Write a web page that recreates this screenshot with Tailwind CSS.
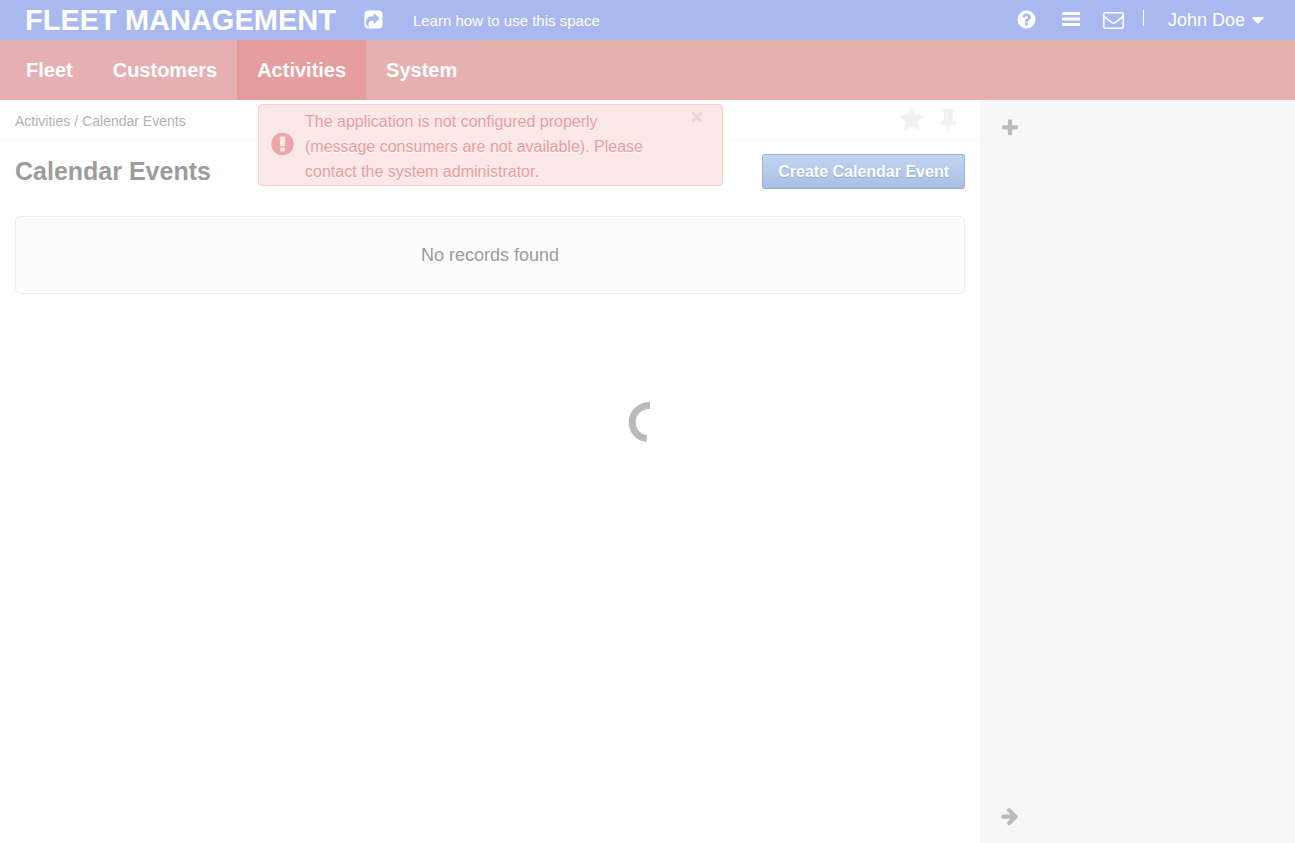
<!DOCTYPE html>
<html lang="en">
<head>
<meta charset="utf-8">
<title>Calendar Events - Fleet Management</title>
<script src="https://cdn.jsdelivr.net/npm/@tailwindcss/browser@4"></script>
</head>
<body class="min-h-screen flex flex-col bg-white font-['Liberation_Sans',Arial,sans-serif]">
<header class="h-10 flex items-center bg-[#aab8f0] text-white pl-[25px] pr-[31px]">
  <a href="#" class="text-[29px] leading-10 font-bold whitespace-nowrap">FLEET MANAGEMENT</a>
  <button type="button" aria-label="Share" class="ml-[27px] pb-px">
    <svg class="size-[21px]" viewBox="0 0 1792 1792" fill="currentColor"><path fill-rule="evenodd" d="M416 128h960q119 0 203.500 84.500T1664 416v960q0 119-84.500 203.500T1376 1664H416q-119 0-203.500-84.500T128 1376V416q0-119 84.500-203.500T416 128zM1005 1197l352-352q19-19 19-45t-19-45l-352-352q-30-31-69-14-40 17-40 59v160q-119 0-216 19.500t-162.500 51-114 79-76.500 95.500-44.500 109-21.500 111.500-5 110.500q0 181 167 404 11 12 25 12 7 0 13-3 22-9 19-33-44-354 62-473 46-52 130-75.500t224-23.500v160q0 42 40 59 12 5 24 5 26 0 45-19z"/></svg>
  </button>
  <a href="#" class="ml-[29px] text-[15px] leading-10 pt-px whitespace-nowrap">Learn how to use this space</a>
  <div class="ml-auto flex items-center">
    <button type="button" aria-label="Help" class="mr-[25px] pb-[2px]">
      <svg class="size-[21px]" viewBox="0 0 1792 1792" fill="currentColor"><path d="M1024 1376v-192q0-14-9-23t-23-9h-192q-14 0-23 9t-9 23v192q0 14 9 23t23 9h192q14 0 23-9t9-23zm256-672q0-88-55.500-163t-138.500-116-170-41q-243 0-371 213-15 24 8 42l132 100q7 6 19 6 16 0 25-12 53-68 86-92 34-24 86-24 48 0 85.500 26t37.500 59q0 38-20 61t-68 45q-63 28-115.500 86.500t-52.500 125.500v36q0 14 9 23t23 9h192q14 0 23-9t9-23q0-19 21.500-49.500t54.500-49.500q32-18 49-28.500t46-35 44.500-48 28-60.500 12.500-81zm384 192q0 209-103 385.500t-279.500 279.500-385.500 103-385.500-103-279.500-279.500-103-385.500 103-385.500 279.500-279.500 385.500-103 385.500 103 279.500 279.500 103 385.500z"/></svg>
    </button>
    <button type="button" aria-label="Menu" class="mr-[23px] pb-[2px]">
      <svg class="w-[18px] h-[14px]" viewBox="0 0 18 14" fill="currentColor"><rect width="18" height="3" rx="0.500"/><rect y="5.500" width="18" height="3" rx="0.500"/><rect y="11" width="18" height="3" rx="0.500"/></svg>
    </button>
    <button type="button" aria-label="Messages" class="mr-[19px]">
      <svg class="w-[21px] h-[17px]" viewBox="0 0 21 17" fill="none" stroke="currentColor" stroke-width="1.600"><rect x="0.800" y="0.800" width="19.400" height="15.400" rx="1.200"/><path d="M1 4C3 6.300 5.500 8 8 10c1.800 1.500 3.200 1.500 5 0 2.500-2 5-3.700 7-6"/></svg>
    </button>
    <span class="w-px h-4 mb-1 bg-white mr-[24px]"></span>
    <button type="button" class="flex items-center gap-[7px] text-lg leading-10 whitespace-nowrap">John Doe
      <svg class="w-[12px] h-[7px]" viewBox="0 0 12 7" fill="currentColor"><path d="M0.600 0h10.800q0.600 0 .6.500 0 .3-.3.600L6.600 6.500q-.6.600-1.200 0L.3 1.100Q0 .8 0 .5 0 0 .6 0z"/></svg>
    </button>
  </div>
</header>

<nav class="flex bg-linear-to-r from-[#e6afb4] to-[#e6b0af] to-40% pl-[6px] text-white text-xl font-bold leading-[60px]">
  <a href="#" class="px-5">Fleet</a>
  <a href="#" class="px-5">Customers</a>
  <a href="#" class="px-5 bg-[#e59d9d]" aria-current="page">Activities</a>
  <a href="#" class="px-5">System</a>
</nav>

<div class="flex flex-1">
  <main class="flex-1 min-w-0 text-[#9c9c9c]">
    <div class="h-[41px] flex items-center justify-between border-b border-[#f7f7f7] pl-[15px] pr-[19px]">
      <div class="flex gap-1 text-sm text-[#b2b2b2] pt-[2px]"><a href="#">Activities</a><span>/</span><a href="#">Calendar Events</a></div>
      <div class="flex gap-3 text-[#f1f1f1] pb-[2px]">
        <button type="button" aria-label="Favorite"><svg class="size-[25px]" viewBox="0 0 1792 1792" fill="currentColor"><path d="M1728 647q0 22-26 48l-363 354 86 500q1 7 1 20 0 21-10.500 35.500t-30.500 14.500q-19 0-40-12l-449-236-449 236q-22 12-40 12-21 0-31.500-14.500t-10.500-35.500q0-6 2-20l86-500-364-354q-25-27-25-48 0-37 56-46l502-73 225-455q19-41 49-41t49 41l225 455 502 73q56 9 56 46z"/></svg></button>
        <button type="button" aria-label="Pin"><svg class="size-[25px]" viewBox="0 0 1792 1792" fill="currentColor"><path d="M800 864v-448q0-14-9-23t-23-9-23 9-9 23v448q0 14 9 23t23 9 23-9 9-23zm672 352q0 26-19 45t-45 19h-429l-51 483q-2 12-10.500 20.500t-20.500 8.500h-1q-27 0-32-27l-76-485h-404q-26 0-45-19t-19-45q0-123 78.500-221.500t177.500-98.500v-512q-52 0-90-38t-38-90 38-90 90-38h640q52 0 90 38t38 90-38 90-90 38v512q99 0 177.500 98.500t78.500 221.500z"/></svg></button>
      </div>
    </div>
    <div class="flex items-center justify-between px-[15px] pt-[13px]">
      <h1 class="text-[25px] leading-[35px] font-bold">Calendar Events</h1>
      <button type="button" class="h-[35px] px-[15px] rounded-[3px] border border-[#a3b5d3] border-b-[#9daac0] bg-linear-to-b from-[#c1d4f4] to-[#a9bfe5] text-white text-base font-bold text-shadow-[0_1px_1px_#93a9cc] whitespace-nowrap">Create Calendar Event</button>
    </div>
    <div class="mx-[15px] mt-[27px] border border-[#eeeeee] rounded-[5px] bg-[#fcfcfc] text-center text-lg leading-[76px]">No records found</div>
  </main>
  <aside class="w-[315px] flex flex-col justify-between items-start bg-[#f7f7f7] text-[#bbbbbb] pl-5 pt-[18px] pb-[17px]">
    <button type="button" aria-label="Add"><svg class="size-5" viewBox="0 0 1792 1792" fill="currentColor"><path d="M1600 736v192q0 40-28 68t-68 28h-416v416q0 40-28 68t-68 28h-192q-40 0-68-28t-28-68v-416h-416q-40 0-68-28t-28-68v-192q0-40 28-68t68-28h416v-416q0-40 28-68t68-28h192q40 0 68 28t28 68v416h416q40 0 68 28t28 68z"/></svg></button>
    <button type="button" aria-label="Collapse sidebar"><svg class="size-5" viewBox="0 0 1792 1792" fill="currentColor"><path d="M1600 960q0 54-37 91l-651 651q-39 37-91 37-51 0-90-37l-75-75q-38-38-38-91t38-91l293-293h-704q-52 0-84.500-37.500t-32.500-90.500v-128q0-53 32.500-90.500t84.500-37.500h704l-293-294q-38-36-38-90t38-90l75-75q38-38 90-38 53 0 91 38l651 651q37 35 37 90z"/></svg></button>
  </aside>
</div>

<!-- Error notification -->
<div role="alert" class="absolute top-[104px] left-[258px] w-[465px] flex items-center pl-3 pr-[18px] pt-[4px] pb-px rounded-[4px] border border-[#f9cccd] bg-[#fde8e8] text-[#e79c9f] text-shadow-[0_1px_0_#ffffffaa]">
  <svg class="size-6 mr-[10px] -mt-[5px] shrink-0" viewBox="0 0 24 24"><circle cx="11.500" cy="12" r="11.200" fill="#eca6a8"/><path d="M9.500 4.500h4a.8.800 0 0 1 .8.900l-.5 8.200a.8.800 0 0 1-.8.700h-3a.8.800 0 0 1-.8-.7l-.5-8.200a.8.800 0 0 1 .8-.9z" fill="#fde8e8"/><rect x="9.200" y="15.500" width="4.600" height="4" rx="1" fill="#fde8e8"/></svg>
  <p class="flex-1 text-base leading-[25px]">The application is not configured properly<br>(message consumers are not available). Please<br>contact the system administrator.</p>
  <button type="button" aria-label="Close" class="self-start mt-px text-[#f2d3d5]"><svg class="size-[14px]" viewBox="0 0 14 14" fill="none" stroke="currentColor" stroke-width="3"><path d="M2.500 2.500l9 9M11.500 2.500l-9 9"/></svg></button>
</div>

<!-- Loading spinner -->
<div role="status" aria-label="Loading" class="fixed inset-0 flex items-center justify-center pointer-events-none">
  <svg class="size-10" viewBox="0 0 40 40" fill="none" stroke="#b9b9b9" stroke-width="7"><path d="M22 3.600C12 3.600 4.200 10.500 4.200 20S11 35.800 18.800 36.400"/></svg>
</div>
</body>
</html>
